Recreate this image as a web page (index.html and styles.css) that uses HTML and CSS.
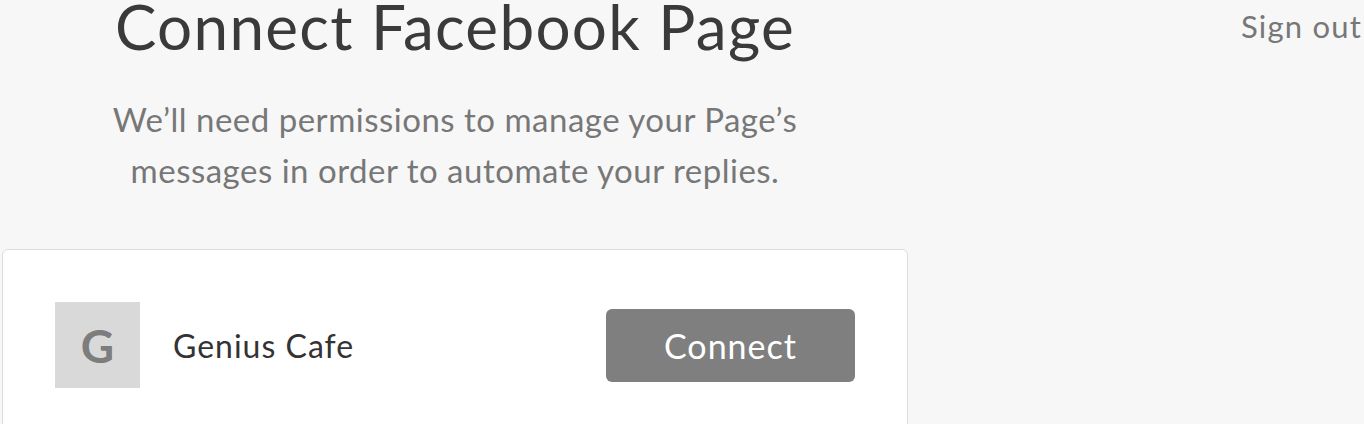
FILE: index.html
```html
<!DOCTYPE html>
<html lang="en">
<head>
  <meta charset="UTF-8">
  <title>Connect Facebook Page</title>
  <link rel="stylesheet" href="styles.css">
</head>
<body>
  <div class="page">
    <main class="main">
      <h1>Connect Facebook Page</h1>
      <p class="intro">We’ll need permissions to manage your Page’s<br>messages in order to automate your replies.</p>

      <div class="card">
        <div class="page-row">
          <div class="avatar">G</div>
          <span class="page-name">Genius Cafe</span>
          <button class="connect">Connect</button>
        </div>
      </div>
    </main>
    <a class="signout" href="#">Sign out</a>
  </div>
</body>
</html>
```

FILE: styles.css
```css
body {
  margin: 0;
  background: #f7f7f7;
  font-family: Lato, "Open Sans", sans-serif;
  overflow: hidden;
}
.page {
  display: flex;
  align-items: flex-start;
  padding-left: 2px;
}
.main {
  width: 906px;
  text-align: center;
}
h1 {
  margin: 0;
  font-size: 62px;
  line-height: 53px;
  font-weight: 400;
  letter-spacing: 1.3px;
  color: #3a3a3a;
}
.intro {
  margin: 41px 0 0;
  font-size: 33px;
  line-height: 51px;
  letter-spacing: 0.5px;
  color: #777;
}
.card {
  margin-top: 53px;
  background: #fff;
  border: 1px solid #ddd;
  border-radius: 6px;
  padding: 52px 52px 60px;
  text-align: left;
}
.page-row {
  display: flex;
  align-items: center;
}
.avatar {
  width: 85px;
  height: 86px;
  background: #d9d9d9;
  color: #7d7d7d;
  font-weight: 700;
  font-size: 46px;
  display: flex;
  align-items: center;
  justify-content: center;
}
.page-name {
  margin-left: 33px;
  font-size: 32px;
  letter-spacing: 1px;
  color: #333;
}
.connect {
  margin-left: auto;
  width: 249px;
  height: 73px;
  background: #7f7f7f;
  border: none;
  border-radius: 6px;
  color: #fff;
  font-family: Lato, sans-serif;
  font-size: 34px;
  letter-spacing: 1px;
}
.signout {
  margin-left: auto;
  margin-right: 2px;
  margin-top: 7px;
  font-size: 31px;
  letter-spacing: 1.2px;
  color: #777;
  text-decoration: none;
}
```
